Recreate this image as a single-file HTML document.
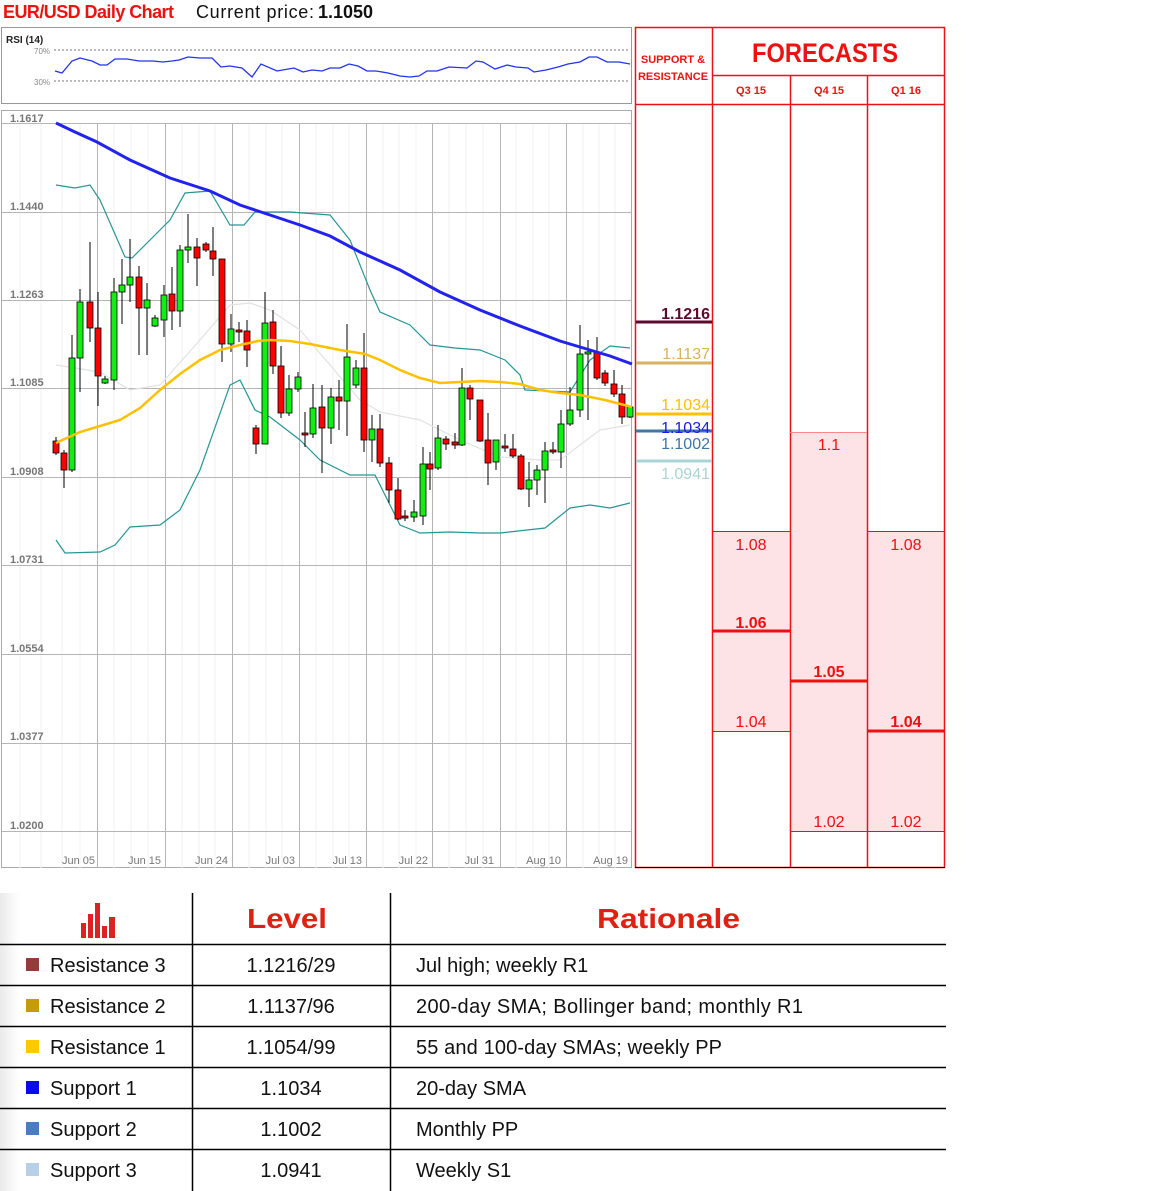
<!DOCTYPE html>
<html><head><meta charset="utf-8"><style>
html,body{margin:0;padding:0;background:#fff;}
svg{display:block;font-family:"Liberation Sans",sans-serif;}
</style></head><body>
<svg width="1152" height="1191" viewBox="0 0 1152 1191" xmlns="http://www.w3.org/2000/svg">
<defs>
<linearGradient id="rowg" x1="0" x2="1" y1="0" y2="0"><stop offset="0" stop-color="#eaeaea"/><stop offset="0.1" stop-color="#fff"/></linearGradient>
</defs>
<text x="3" y="18" font-size="18" font-weight="bold" fill="#ee1111" textLength="171">EUR/USD Daily Chart</text>
<text x="196" y="18" font-size="18" fill="#111" textLength="118">Current price:</text>
<text x="318" y="18" font-size="18" font-weight="bold" fill="#111">1.1050</text>

<rect x="1.5" y="27.5" width="630" height="76" fill="#fff" stroke="#999"/>
<text x="6" y="43" font-size="10" font-weight="bold" fill="#222">RSI (14)</text>
<text x="34" y="54" font-size="8" fill="#888">70%</text>
<text x="34" y="85" font-size="8" fill="#888">30%</text>
<line x1="54" y1="50" x2="630" y2="50" stroke="#777" stroke-dasharray="2,2"/>
<line x1="54" y1="81" x2="630" y2="81" stroke="#777" stroke-dasharray="2,2"/>
<polyline fill="none" stroke="#2233ee" stroke-width="1.3" points="55,71 62,73 72,61 80,58 92,61 100,65 107,65 115,59 127,59 139,61 153,61 163,62 172,61 179,60 188,57 200,58 212,58 221,67 230,66 242,68 252,77 261,64 277,71 294,68 303,72 312,70 322,71 330,68 340,68 349,64 358,66 367,71 376,71 388,73 400,76 410,77 419,76 427,71 437,71 449,67 467,68 476,61 483,62 495,69 507,65 516,67 528,68 534,72 546,70 558,67 568,64 580,62 589,57 597,57 607,62 619,62 630,64"/>

<rect x="1.5" y="110.5" width="630" height="757" fill="#fff" stroke="#aaa"/>
<g stroke="#f0f0f0" stroke-width="1">
<line x1="20" y1="123" x2="20" y2="868"/><line x1="41" y1="123" x2="41" y2="868"/><line x1="62" y1="123" x2="62" y2="868"/><line x1="80" y1="123" x2="80" y2="868"/>
<line x1="114" y1="123" x2="114" y2="868"/><line x1="131" y1="123" x2="131" y2="868"/><line x1="148" y1="123" x2="148" y2="868"/>
<line x1="182" y1="123" x2="182" y2="868"/><line x1="199" y1="123" x2="199" y2="868"/><line x1="215" y1="123" x2="215" y2="868"/>
<line x1="249" y1="123" x2="249" y2="868"/><line x1="266" y1="123" x2="266" y2="868"/><line x1="282" y1="123" x2="282" y2="868"/>
<line x1="316" y1="123" x2="316" y2="868"/><line x1="333" y1="123" x2="333" y2="868"/><line x1="349" y1="123" x2="349" y2="868"/>
<line x1="383" y1="123" x2="383" y2="868"/><line x1="399" y1="123" x2="399" y2="868"/><line x1="416" y1="123" x2="416" y2="868"/>
<line x1="449" y1="123" x2="449" y2="868"/><line x1="466" y1="123" x2="466" y2="868"/><line x1="483" y1="123" x2="483" y2="868"/>
<line x1="516" y1="123" x2="516" y2="868"/><line x1="533" y1="123" x2="533" y2="868"/><line x1="549" y1="123" x2="549" y2="868"/>
<line x1="583" y1="123" x2="583" y2="868"/><line x1="599" y1="123" x2="599" y2="868"/><line x1="615" y1="123" x2="615" y2="868"/>
</g>
<g stroke="#b5b5b5" stroke-width="1">
<line x1="2" y1="123.5" x2="631" y2="123.5"/><line x1="2" y1="212.5" x2="631" y2="212.5"/><line x1="2" y1="300.5" x2="631" y2="300.5"/>
<line x1="2" y1="388.5" x2="631" y2="388.5"/><line x1="2" y1="477.5" x2="631" y2="477.5"/><line x1="2" y1="565.5" x2="631" y2="565.5"/>
<line x1="2" y1="654.5" x2="631" y2="654.5"/><line x1="2" y1="743.5" x2="631" y2="743.5"/><line x1="2" y1="831.5" x2="631" y2="831.5"/>
<line x1="97.5" y1="123" x2="97.5" y2="868"/><line x1="165.5" y1="123" x2="165.5" y2="868"/><line x1="232.5" y1="123" x2="232.5" y2="868"/>
<line x1="299.5" y1="123" x2="299.5" y2="868"/><line x1="366.5" y1="123" x2="366.5" y2="868"/><line x1="432.5" y1="123" x2="432.5" y2="868"/>
<line x1="500.5" y1="123" x2="500.5" y2="868"/><line x1="566.5" y1="123" x2="566.5" y2="868"/>
</g>
<g font-size="11" fill="#777" font-weight="bold">
<text x="10" y="122">1.1617</text><text x="10" y="210">1.1440</text><text x="10" y="298">1.1263</text>
<text x="10" y="386">1.1085</text><text x="10" y="475">1.0908</text><text x="10" y="563">1.0731</text>
<text x="10" y="652">1.0554</text><text x="10" y="740">1.0377</text><text x="10" y="829">1.0200</text>
</g>
<g font-size="11" fill="#777" text-anchor="end">
<text x="95" y="864">Jun 05</text><text x="161" y="864">Jun 15</text><text x="228" y="864">Jun 24</text>
<text x="295" y="864">Jul 03</text><text x="362" y="864">Jul 13</text><text x="428" y="864">Jul 22</text>
<text x="494" y="864">Jul 31</text><text x="561" y="864">Aug 10</text><text x="628" y="864">Aug 19</text>
</g>
<polyline fill="none" stroke="#e2e2e2" stroke-width="1.2" points="56,365 100,372 130,390 160,385 200,340 230,305 250,303 270,310 300,330 330,365 360,400 380,412 420,420 460,440 500,457 540,460 560,460 580,445 600,430 630,425"/>
<polyline fill="none" stroke="#279595" stroke-width="1.2" points="56,185 75,188 90,185 100,200 125,257 132,258 150,240 170,220 185,193 210,191 230,225 244,225 255,212 275,212 290,212 330,215 350,240 370,290 380,312 410,325 430,345 455,348 480,350 505,360 520,375 525,390 570,392 590,360 610,346 630,348"/>
<polyline fill="none" stroke="#279595" stroke-width="1.2" points="56,540 65,553 100,552 115,545 130,527 160,525 180,510 200,470 230,385 240,380 255,410 270,417 300,440 320,460 350,475 375,475 400,525 420,533 450,532 480,533 500,533 545,528 570,508 590,505 610,508 630,503"/>
<g stroke="#000" stroke-width="1">
<path d="M56 437V455M64 450V488M72 335V472M80 289V392M90 242V342M98 292V406M105 376V384M114 278V390M122 259V324M130 239V302M139 266V355M147 283V355M155 315V327M164 285V337M172 267V330M180 245V327M188 214V263M197 238V286M206 242V252M213 227V276M222 259V362M231 314V352M239 322V342M247 320V367M256 425V454M265 292V444M273 310V374M281 346V418M289 375V416M298 372V392M305 412V447M313 384V438M322 385V473M331 388V444M339 380V430M347 324V436M356 360V388M364 333V452M372 415V462M380 414V467M389 457V503M398 478V520M405 510V521M414 500V522M423 447V525M430 452V490M438 425V470M446 436V450M455 433V449M462 368V446M470 385V420M480 400V442M488 413V485M496 440V470M505 434V452M513 434V458M521 454V490M529 462V507M537 465V495M545 442V503M553 442V454M561 410V468M570 387V426M580 325V417M588 340V420M597 337V380M605 370V386M614 370V397M622 385V424M630 406V418"/>
</g>
<g stroke="#000" stroke-width="0.8" fill="#ff0000">
<rect x="53" y="441" width="6" height="12"/><rect x="61" y="453" width="6" height="17"/><rect x="87" y="302" width="6" height="26"/><rect x="95" y="328" width="6" height="48"/>
<rect x="136" y="277" width="6" height="31"/><rect x="169" y="294" width="6" height="17"/><rect x="194" y="247" width="6" height="11"/><rect x="203" y="244" width="6" height="6"/>
<rect x="210" y="251" width="6" height="8"/><rect x="219" y="259" width="6" height="85"/><rect x="236" y="330" width="6" height="2"/><rect x="244" y="331" width="6" height="19"/>
<rect x="253" y="428" width="6" height="16"/><rect x="270" y="322" width="6" height="44"/><rect x="278" y="366" width="6" height="47"/><rect x="302" y="433" width="6" height="2"/>
<rect x="319" y="407" width="6" height="21"/><rect x="336" y="397" width="6" height="4"/><rect x="361" y="368" width="6" height="72"/><rect x="377" y="429" width="6" height="34"/>
<rect x="386" y="463" width="6" height="27"/><rect x="395" y="490" width="6" height="29"/><rect x="402" y="516" width="6" height="2"/><rect x="427" y="464" width="6" height="5"/>
<rect x="443" y="439" width="6" height="5"/><rect x="452" y="442" width="6" height="3"/><rect x="467" y="388" width="6" height="11"/><rect x="477" y="400" width="6" height="41"/>
<rect x="485" y="440" width="6" height="23"/><rect x="502" y="446" width="6" height="2"/><rect x="510" y="449" width="6" height="7"/><rect x="518" y="456" width="6" height="33"/>
<rect x="550" y="450" width="6" height="2"/><rect x="594" y="352" width="6" height="26"/><rect x="602" y="373" width="6" height="10"/><rect x="611" y="384" width="6" height="10"/><rect x="619" y="394" width="6" height="23"/>
</g>
<g stroke="#000" stroke-width="0.8" fill="#11ee11">
<rect x="69" y="358" width="6" height="112"/><rect x="77" y="302" width="6" height="56"/><rect x="102" y="379" width="6" height="4"/><rect x="111" y="292" width="6" height="88"/>
<rect x="119" y="285" width="6" height="7"/><rect x="127" y="277" width="6" height="8"/><rect x="144" y="300" width="6" height="8"/><rect x="152" y="318" width="6" height="8"/>
<rect x="161" y="295" width="6" height="25"/><rect x="177" y="250" width="6" height="61"/><rect x="185" y="247" width="6" height="3"/><rect x="228" y="329" width="6" height="15"/>
<rect x="262" y="323" width="6" height="121"/><rect x="286" y="389" width="6" height="24"/><rect x="295" y="377" width="6" height="12"/><rect x="310" y="408" width="6" height="26"/>
<rect x="328" y="397" width="6" height="31"/><rect x="344" y="357" width="6" height="44"/><rect x="353" y="368" width="6" height="17"/><rect x="369" y="429" width="6" height="11"/>
<rect x="411" y="512" width="6" height="5"/><rect x="420" y="464" width="6" height="52"/><rect x="435" y="438" width="6" height="30"/><rect x="459" y="388" width="6" height="57"/>
<rect x="493" y="440" width="6" height="22"/><rect x="526" y="480" width="6" height="9"/><rect x="534" y="470" width="6" height="10"/><rect x="542" y="451" width="6" height="19"/>
<rect x="558" y="424" width="6" height="28"/><rect x="567" y="410" width="6" height="14"/><rect x="577" y="354" width="6" height="56"/><rect x="585" y="352" width="6" height="2"/><rect x="627" y="407" width="6" height="10"/>
</g>
<polyline fill="none" stroke="#ffc000" stroke-width="2.5" points="56,443 80,432 100,426 120,420 140,408 160,390 180,374 200,360 220,350 240,345 258,341 270,340 290,341 310,344 340,350 365,354 380,360 400,370 420,378 440,383 460,382 480,381 500,382 520,384 540,390 560,393 580,395 605,400 632,407"/>
<polyline fill="none" stroke="#2222ee" stroke-width="3" points="56,123 75,132 97,142 130,160 170,178 210,191 240,205 270,215 300,225 330,236 360,252 400,270 440,292 480,310 520,326 560,341 590,350 610,356 632,364"/>

<rect x="713" y="531" width="77" height="200" fill="#fde3e5"/>
<rect x="790" y="432" width="77" height="399" fill="#fde3e5"/>
<rect x="867" y="531" width="78" height="300" fill="#fde3e5"/>
<g stroke="#ee1111" stroke-width="1.5" fill="none">
<rect x="635.5" y="27.5" width="309" height="840"/>
<line x1="712.5" y1="27" x2="712.5" y2="868"/>
<line x1="712" y1="75.5" x2="945" y2="75.5"/>
<line x1="636" y1="104.5" x2="945" y2="104.5"/>
<line x1="790.5" y1="75" x2="790.5" y2="868"/>
<line x1="867.5" y1="75" x2="867.5" y2="868"/>
</g>
<g stroke="#ee1111" stroke-width="1">
<line x1="713" y1="531.5" x2="790" y2="531.5"/><line x1="713" y1="731.5" x2="790" y2="731.5"/>
<line x1="790" y1="432.5" x2="867" y2="432.5" stroke="#ff8888"/><line x1="790" y1="831.5" x2="867" y2="831.5"/>
<line x1="867" y1="531.5" x2="945" y2="531.5"/><line x1="867" y1="831.5" x2="945" y2="831.5"/>
</g>
<g stroke="#ee1111" stroke-width="3">
<line x1="713" y1="631" x2="790" y2="631"/><line x1="790" y1="681" x2="867" y2="681"/><line x1="867" y1="731" x2="945" y2="731"/>
</g>
<line x1="635" y1="867.5" x2="945" y2="867.5" stroke="#000" stroke-width="1"/>
<text x="673" y="63" font-size="11" font-weight="bold" fill="#ee1111" text-anchor="middle">SUPPORT &amp;</text>
<text x="673" y="80" font-size="11" font-weight="bold" fill="#ee1111" text-anchor="middle">RESISTANCE</text>
<text x="752" y="62" font-size="27" font-weight="bold" fill="#ee1111" textLength="146" lengthAdjust="spacingAndGlyphs">FORECASTS</text>
<g font-size="11" font-weight="bold" fill="#ee1111" text-anchor="middle">
<text x="751" y="94">Q3 15</text><text x="829" y="94">Q4 15</text><text x="906" y="94">Q1 16</text>
</g>
<g font-size="16" fill="#ee1111" text-anchor="middle">
<text x="751" y="550">1.08</text><text x="751" y="727">1.04</text>
<text x="829" y="450">1.1</text><text x="829" y="827">1.02</text>
<text x="906" y="550">1.08</text><text x="906" y="827">1.02</text>
</g>
<g font-size="16" font-weight="bold" fill="#ee1111" text-anchor="middle">
<text x="751" y="628">1.06</text><text x="829" y="677">1.05</text><text x="906" y="727">1.04</text>
</g>
<line x1="636" y1="322" x2="712" y2="322" stroke="#5c0a2e" stroke-width="3"/>
<line x1="636" y1="363" x2="712" y2="363" stroke="#d9b25f" stroke-width="3"/>
<line x1="636" y1="414" x2="712" y2="414" stroke="#ffc000" stroke-width="3"/>
<line x1="636" y1="431" x2="712" y2="431" stroke="#3b78a8" stroke-width="3"/>
<line x1="636" y1="461" x2="712" y2="461" stroke="#a8d4d4" stroke-width="3"/>
<g font-size="16" text-anchor="end" font-weight="bold">
<text x="710" y="319" fill="#5c0a2e">1.1216</text>
<text x="710" y="359" fill="#d9b25f" font-weight="normal">1.1137</text>
<text x="710" y="410" fill="#ffc000" font-weight="normal">1.1034</text>
<text x="710" y="433" fill="#1a1aee" font-weight="normal">1.1034</text>
<text x="710" y="449" fill="#3b78a8" font-weight="normal">1.1002</text>
<text x="710" y="479" fill="#a8d4d4" font-weight="normal">1.0941</text>
</g>

<rect x="0" y="893" width="190" height="298" fill="url(#rowg)"/>
<g fill="#dd2222">
<rect x="81" y="923" width="5" height="15"/><rect x="88" y="914" width="5" height="24"/><rect x="95" y="903" width="5" height="35"/><rect x="102" y="926" width="5" height="12"/><rect x="109" y="917" width="6" height="21"/>
</g>
<text x="247" y="928" font-size="28" font-weight="bold" fill="#e02010" textLength="80" lengthAdjust="spacingAndGlyphs">Level</text>
<text x="597" y="928" font-size="28" font-weight="bold" fill="#e02010" textLength="143" lengthAdjust="spacingAndGlyphs">Rationale</text>
<g stroke="#000" stroke-width="1.5">
<line x1="192.5" y1="893" x2="192.5" y2="1191"/><line x1="390.5" y1="893" x2="390.5" y2="1191"/>
<line x1="0" y1="944.5" x2="946" y2="944.5"/><line x1="0" y1="985.5" x2="946" y2="985.5"/><line x1="0" y1="1026.5" x2="946" y2="1026.5"/>
<line x1="0" y1="1067.5" x2="946" y2="1067.5"/><line x1="0" y1="1108.5" x2="946" y2="1108.5"/><line x1="0" y1="1149.5" x2="946" y2="1149.5"/>
</g>
<rect x="26" y="958" width="13" height="13" fill="#943c3c"/>
<rect x="26" y="999" width="13" height="13" fill="#c89a0a"/>
<rect x="26" y="1040" width="13" height="13" fill="#ffc800"/>
<rect x="26" y="1081" width="13" height="13" fill="#0a0aee"/>
<rect x="26" y="1122" width="13" height="13" fill="#4a7cc0"/>
<rect x="26" y="1163" width="13" height="13" fill="#b8cfe8"/>
<g font-size="20" fill="#111">
<text x="50" y="972">Resistance 3</text><text x="50" y="1013">Resistance 2</text><text x="50" y="1054">Resistance 1</text>
<text x="50" y="1095">Support 1</text><text x="50" y="1136">Support 2</text><text x="50" y="1177">Support 3</text>
<text x="416" y="972">Jul high; weekly R1</text>
<text x="416" y="1013" textLength="387">200-day SMA; Bollinger band; monthly R1</text>
<text x="416" y="1054" textLength="306">55 and 100-day SMAs; weekly PP</text>
<text x="416" y="1095">20-day SMA</text><text x="416" y="1136">Monthly PP</text><text x="416" y="1177">Weekly S1</text>
</g>
<g font-size="20" fill="#111" text-anchor="middle">
<text x="291" y="972">1.1216/29</text><text x="291" y="1013">1.1137/96</text><text x="291" y="1054">1.1054/99</text>
<text x="291" y="1095">1.1034</text><text x="291" y="1136">1.1002</text><text x="291" y="1177">1.0941</text>
</g>
</svg>
</body></html>
